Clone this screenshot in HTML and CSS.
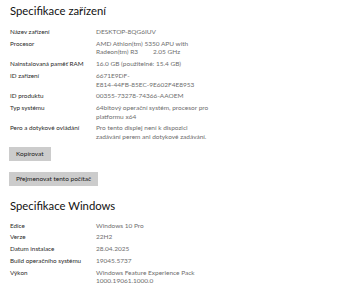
FILE: index.html
```html
<!DOCTYPE html>
<html>
<head>
    <title>Informace o systému</title>
    <meta name="viewport" content="width=device-width, initial-scale=1.0">
    <link rel="stylesheet" href="styles.css">
</head>
<body>
    <div class="page">
        <h2 class="section-title">Specifikace zařízení</h2>
        <div class="specs">
            <div class="label">Název zařízení</div>
            <div class="value">DESKTOP-8QG6IUV</div>

            <div class="label">Procesor</div>
            <div class="value">AMD Athlon(tm) 5350 APU with Radeon(tm) R3&nbsp;&nbsp;&nbsp;&nbsp;&nbsp;&nbsp;&nbsp;&nbsp; 2.05 GHz</div>

            <div class="label">Nainstalovaná paměť RAM</div>
            <div class="value">16.0 GB (použitelné: 15.4 GB)</div>

            <div class="label">ID zařízení</div>
            <div class="value">6671E9DF-<br>E814-44FB-85EC-9E602F4E8953</div>

            <div class="label">ID produktu</div>
            <div class="value">00355-73278-74366-AAOEM</div>

            <div class="label">Typ systému</div>
            <div class="value">64bitový operační systém, procesor pro platformu x64</div>

            <div class="label">Pero a dotykové ovládání</div>
            <div class="value">Pro tento displej není k dispozici zadávání perem ani dotykové zadávání.</div>
        </div>

        <div class="actions">
            <button class="btn">Kopírovat</button>
            <button class="btn">Přejmenovat tento počítač</button>
        </div>

        <h2 class="section-title second">Specifikace Windows</h2>
        <div class="specs">
            <div class="label">Edice</div>
            <div class="value">Windows 10 Pro</div>

            <div class="label">Verze</div>
            <div class="value">22H2</div>

            <div class="label">Datum instalace</div>
            <div class="value">28.04.2025</div>

            <div class="label">Build operačního systému</div>
            <div class="value">19045.5737</div>

            <div class="label">Výkon</div>
            <div class="value">Windows Feature Experience Pack 1000.19061.1000.0</div>
        </div>
    </div>
</body>
</html>
```

FILE: styles.css
```css
/* 基础样式 */
body {
    font-family: Lato, "Liberation Sans", sans-serif;
    margin: 0;
    padding: 0;
    background-color: #ffffff;
    color: #1a1a1a;
}

.page {
    padding: 3px 10px 0 10px;
}

.section-title {
    font-size: 11.3px;
    font-weight: 400;
    line-height: 16px;
    margin: 0 0 9px 0;
    color: #111;
}

.section-title.second {
    margin-top: 12px;
    margin-bottom: 8px;
}

.specs {
    display: grid;
    grid-template-columns: 86px 113px;
    row-gap: 3px;
    font-size: 6.5px;
    line-height: 8.7px;
}

.label {
    font-size: 6.3px;
    color: #2a2a2a;
}

.value {
    color: #6e6e6e;
}

.actions {
    display: flex;
    flex-direction: column;
    align-items: flex-start;
    gap: 11px;
    margin-top: 5px;
}

.btn {
    font-family: inherit;
    font-size: 6.5px;
    line-height: 8px;
    background: #cccccc;
    color: #1a1a1a;
    border: none;
    border-radius: 0;
    padding: 3px 7px;
    margin-left: -1px;
    cursor: pointer;
}
```
